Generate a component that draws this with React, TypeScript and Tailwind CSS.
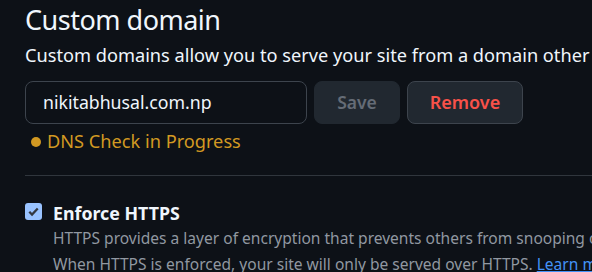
import React from "react";

export default function App() {
  return (
    <div
      className="w-[592px] h-[272px] overflow-hidden bg-[#0d1117] text-[#f0f6fc]"
      style={{ fontFamily: '"Noto Sans", "Liberation Sans", sans-serif' }}
    >
      <div className="pl-[25px] w-[800px]">
        <h2 className="text-[27px] leading-[38px] font-normal tracking-[-0.5px] pt-[1px]">Custom domain</h2>
        <p className="text-[18.2px] leading-[26px] whitespace-nowrap mt-[3px]">
          Custom domains allow you to serve your site from a domain other than nikitabhusal.github.io.
        </p>
        <div className="flex items-center gap-[7px] mt-[13px]">
          <div className="w-[282px] h-[43px] rounded-[8px] border border-[#3d444d] bg-[#0d1117] flex items-center pl-[17px] text-[17.7px]">
            nikitabhusal.com.np
          </div>
          <button className="w-[86px] h-[43px] rounded-[8px] bg-[#212830] text-[#656c76] font-semibold text-[17.5px] border border-[#212830]">
            Save
          </button>
          <button className="w-[116px] h-[43px] rounded-[8px] bg-[#212830] text-[#f85149] font-semibold text-[18px] border border-[#3d444d]">
            Remove
          </button>
        </div>
        <div className="flex items-center mt-[3px] h-[30px] text-[#d29922] text-[18.2px]">
          <span className="shrink-0 w-[10px] h-[10px] rounded-full bg-[#d29922] ml-[6px] mr-[6px]" />
          DNS Check in Progress
        </div>
        <div className="h-px bg-[#30363d] mt-[18px] w-[600px]" />
        <div className="flex mt-[26px]">
          <div className="shrink-0 w-[17px] h-[17px] rounded-[3px] bg-[#99c3ff] flex items-center justify-center mt-[1px]">
            <svg width="13" height="13" viewBox="0 0 16 16">
              <path d="M2.8 8.3 L6.2 11.7 L13.2 4.3" fill="none" stroke="#333840" strokeWidth="2.8" />
            </svg>
          </div>
          <div className="ml-[11px]">
            <div className="text-[17.8px] leading-[20px] font-bold mt-[1px]">Enforce HTTPS</div>
            <div className="text-[15.55px] leading-[25.5px] text-[#9198a1] whitespace-nowrap mt-[3px]">
              HTTPS provides a layer of encryption that prevents others from snooping on or tampering with traffic to your site.
              <br />
              When HTTPS is enforced, your site will only be served over HTTPS.{" "}
              <span className="text-[#4493f8] underline">Learn more about securing your GitHub Pages site with HTTPS</span>.
            </div>
          </div>
        </div>
      </div>
    </div>
  );
}
